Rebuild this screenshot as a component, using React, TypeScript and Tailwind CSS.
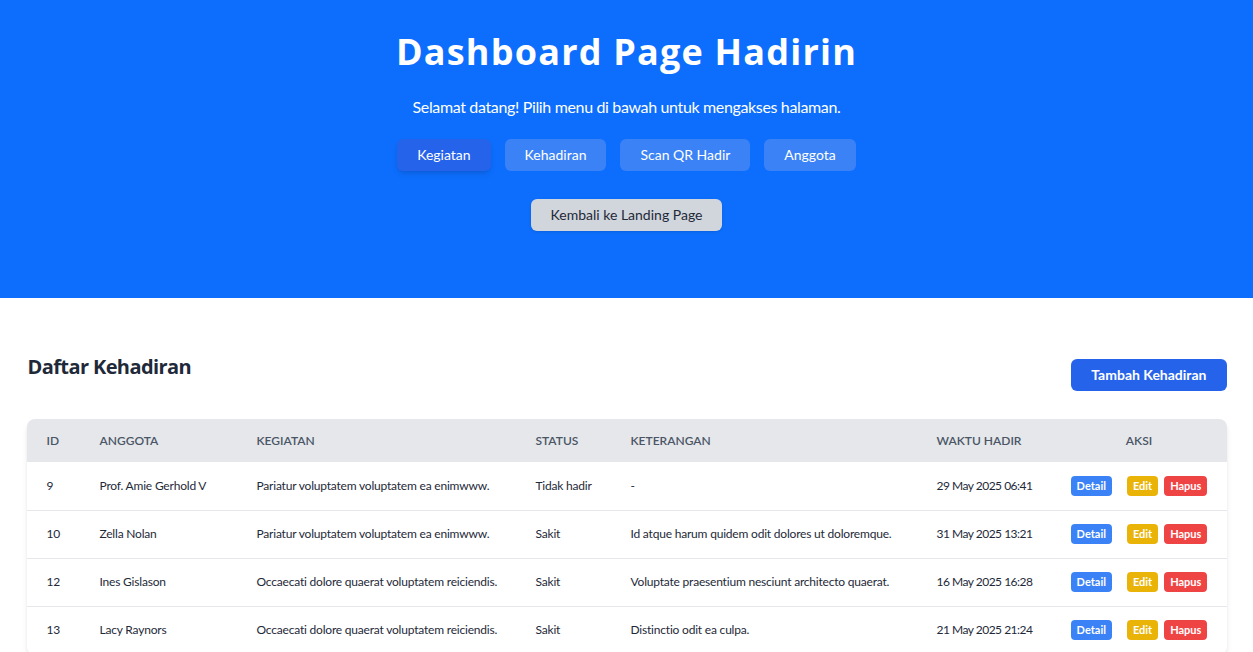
import React from "react";

const rows = [
  {
    id: 9,
    anggota: "Prof. Amie Gerhold V",
    kegiatan: "Pariatur voluptatem voluptatem ea enimwww.",
    status: "Tidak hadir",
    ket: "-",
    waktu: "29 May 2025 06:41",
  },
  {
    id: 10,
    anggota: "Zella Nolan",
    kegiatan: "Pariatur voluptatem voluptatem ea enimwww.",
    status: "Sakit",
    ket: "Id atque harum quidem odit dolores ut doloremque.",
    waktu: "31 May 2025 13:21",
  },
  {
    id: 12,
    anggota: "Ines Gislason",
    kegiatan: "Occaecati dolore quaerat voluptatem reiciendis.",
    status: "Sakit",
    ket: "Voluptate praesentium nesciunt architecto quaerat.",
    waktu: "16 May 2025 16:28",
  },
  {
    id: 13,
    anggota: "Lacy Raynors",
    kegiatan: "Occaecati dolore quaerat voluptatem reiciendis.",
    status: "Sakit",
    ket: "Distinctio odit ea culpa.",
    waktu: "21 May 2025 21:24",
  },
];

const menu = ["Kegiatan", "Kehadiran", "Scan QR Hadir", "Anggota"];

const App = () => {
  return (
    <div className="min-h-screen bg-white font-['Segoe_UI',Lato,sans-serif] text-gray-800">
      {/* header */}
      <div className="bg-[#0d6efd] pt-8 pb-[67px] flex flex-col items-center text-white">
        <h1 className="text-4xl font-bold leading-10 tracking-[1.2px] font-['Open_Sans',sans-serif]">
          Dashboard Page Hadirin
        </h1>
        <p className="mt-[23px] text-base leading-6 tracking-[-0.35px]">
          Selamat datang! Pilih menu di bawah untuk mengakses halaman.
        </p>
        <div className="mt-5 flex gap-3.5">
          {menu.map((m, i) => (
            <button
              key={m}
              className={
                i === 0
                  ? "h-8 px-5 rounded-md text-sm bg-[#2563eb] shadow-md"
                  : "h-8 px-5 rounded-md text-sm bg-[#3b82f6]"
              }
            >
              {m}
            </button>
          ))}
        </div>
        <button className="mt-7 h-8 px-5 rounded-md text-sm bg-gray-300 text-gray-800 shadow">
          Kembali ke Landing Page
        </button>
      </div>

      {/* list */}
      <div className="max-w-[1200px] mx-auto pt-[55px]">
        <div className="flex justify-between items-start">
          <h2 className="text-xl font-bold leading-7 ml-px tracking-[-0.6px] font-['Open_Sans',sans-serif]">
            Daftar Kehadiran
          </h2>
          <button className="mt-1.5 h-8 px-5 rounded-md text-sm font-bold text-white bg-[#2563eb]">
            Tambah Kehadiran
          </button>
        </div>

        <div className="mt-7 rounded-lg shadow-md overflow-hidden">
          <table className="w-full table-fixed text-left">
            <thead className="bg-gray-200 text-gray-600 text-xs font-semibold uppercase">
              <tr>
                <th className="w-[53px] pl-5 h-[43px] font-semibold">ID</th>
                <th className="w-[157px] px-5 font-semibold">Anggota</th>
                <th className="w-[279px] px-5 font-semibold">Kegiatan</th>
                <th className="w-[95px] px-5 font-semibold">Status</th>
                <th className="w-[306px] px-5 font-semibold">Keterangan</th>
                <th className="w-[135px] px-5 font-semibold">Waktu Hadir</th>
                <th className="px-5 font-semibold text-center">Aksi</th>
              </tr>
            </thead>
            <tbody className="text-xs text-gray-800 whitespace-nowrap tracking-[-0.2px]">
              {rows.map((r) => (
                <tr key={r.id} className="border-b border-gray-200 h-12">
                  <td className="pl-5">{r.id}</td>
                  <td className="px-5">{r.anggota}</td>
                  <td className="px-5">{r.kegiatan}</td>
                  <td className="px-5">{r.status}</td>
                  <td className="px-5">{r.ket}</td>
                  <td className="px-5 tracking-[-0.5px]">{r.waktu}</td>
                  <td className="px-5">
                    <div className="flex justify-center items-center tracking-normal">
                      <span className="h-5 px-1.5 rounded bg-[#3b82f6] text-white text-[11px] font-bold leading-5 mr-[15px]">
                        Detail
                      </span>
                      <span className="h-5 px-1.5 rounded bg-[#eab308] text-white text-[11px] font-bold leading-5 mr-1.5">
                        Edit
                      </span>
                      <span className="h-5 px-1.5 rounded bg-[#ef4444] text-white text-[11px] font-bold leading-5">
                        Hapus
                      </span>
                    </div>
                  </td>
                </tr>
              ))}
            </tbody>
          </table>
        </div>
      </div>
    </div>
  );
};

export default App;
